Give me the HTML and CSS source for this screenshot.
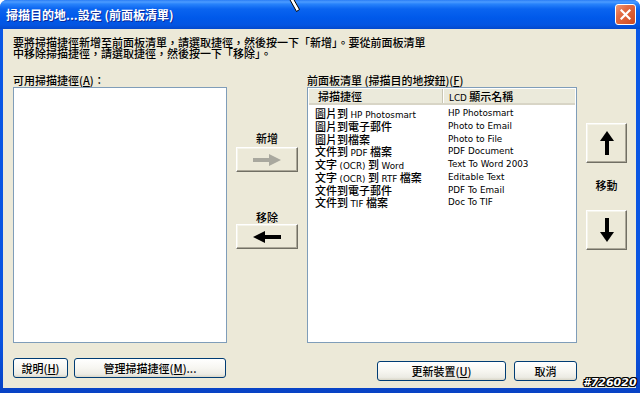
FILE: index.html
```html
<!DOCTYPE html>
<html lang="zh-Hant">
<head>
<meta charset="utf-8">
<title>掃描目的地...設定</title>
<link rel="stylesheet" href="styles.css">
</head>
<body>
<div class="window">
  <div class="titlebar">
    <span class="title">掃描目的地...設定 (前面板清單)</span>
    <button class="close" aria-label="關閉">
      <svg width="11" height="11" viewBox="0 0 11 11"><path d="M1.5 1.5 L9.5 9.5 M9.5 1.5 L1.5 9.5" stroke="#fff" stroke-width="2.2" stroke-linecap="square"/></svg>
    </button>
  </div>
  <div class="client">
    <p class="intro">要將掃描捷徑新增至前面板清單，請選取捷徑，然後按一下「新增」。要從前面板清單<br>中移除掃描捷徑，請選取捷徑，然後按一下「移除」。</p>
    <div class="panes">
      <div class="lbl lbl-left">可用掃描捷徑(<u>A</u>)：</div>
      <div class="lbl lbl-right">前面板清單 (掃描目的地按鈕)(<u>F</u>)</div>
      <div class="listbox left-list"></div>
      <div class="mid">
        <div class="mid-label">新增</div>
        <button class="cbtn arrow-btn" disabled>
          <svg width="28" height="12" viewBox="0 0 28 12"><rect x="0" y="4" width="18" height="4" fill="#a9a89e"/><path d="M16 0 L28 6 L16 12 Z" fill="#a9a89e"/></svg>
        </button>
        <div class="mid-label second">移除</div>
        <button class="cbtn arrow-btn">
          <svg width="28" height="12" viewBox="0 0 28 12"><rect x="10" y="4" width="18" height="4" fill="#000"/><path d="M12 0 L0 6 L12 12 Z" fill="#000"/></svg>
        </button>
      </div>
      <div class="listbox listview">
        <div class="lv-head"><span>掃描捷徑</span><span class="c2"><span class="en">LCD</span> 顯示名稱</span></div>
        <div class="lv-rows">
          <div class="lv-row"><span>圖片到 <span class="en">HP Photosmart</span></span><span class="en">HP Photosmart</span></div>
          <div class="lv-row"><span>圖片到電子郵件</span><span class="en">Photo to Email</span></div>
          <div class="lv-row"><span>圖片到檔案</span><span class="en">Photo to File</span></div>
          <div class="lv-row"><span>文件到 <span class="en">PDF</span> 檔案</span><span class="en">PDF Document</span></div>
          <div class="lv-row"><span>文字 <span class="en">(OCR)</span> 到 <span class="en">Word</span></span><span class="en">Text To Word 2003</span></div>
          <div class="lv-row"><span>文字 <span class="en">(OCR)</span> 到 <span class="en">RTF</span> 檔案</span><span class="en">Editable Text</span></div>
          <div class="lv-row"><span>文件到電子郵件</span><span class="en">PDF To Email</span></div>
          <div class="lv-row"><span>文件到 <span class="en">TIF</span> 檔案</span><span class="en">Doc To TIF</span></div>
        </div>
      </div>
      <div class="move">
        <button class="cbtn move-btn" aria-label="上移">
          <svg width="14" height="24" viewBox="0 0 14 24"><path d="M7 0 L14 10 L0 10 Z" fill="#000"/><rect x="5" y="8" width="4" height="16" fill="#000"/></svg>
        </button>
        <div class="move-label">移動</div>
        <button class="cbtn move-btn" aria-label="下移">
          <svg width="14" height="24" viewBox="0 0 14 24"><path d="M7 24 L14 14 L0 14 Z" fill="#000"/><rect x="5" y="0" width="4" height="16" fill="#000"/></svg>
        </button>
      </div>
    </div>
    <div class="footer">
      <div class="group">
        <button class="xbtn help">說明(<u>H</u>)</button>
        <button class="xbtn manage">管理掃描捷徑(<u>M</u>)...</button>
      </div>
      <div class="group right">
        <button class="xbtn update">更新裝置(<u>U</u>)</button>
        <button class="xbtn cancel">取消</button>
      </div>
    </div>
  </div>
  <div class="stamp">#726020</div>
  <svg class="cursor" width="16" height="14" viewBox="0 0 16 14"><path d="M3.5 -1 L7.5 -1 L13.5 9.5 L10.5 11.5 Z" fill="#fff" stroke="#000" stroke-width="1"/></svg>
</div>
</body>
</html>
```

FILE: styles.css
```css
* { box-sizing: border-box; }
html, body { margin: 0; padding: 0; background: #ffffff; }
body {
  font-family: "Noto Sans CJK TC", "Liberation Sans", sans-serif;
  font-size: 11px;
  font-weight: 500;
  color: #000;
}
.en {
  font-family: "DejaVu Sans", "Noto Sans CJK TC", sans-serif;
  font-size: 8.8px;
  font-weight: normal;
  line-height: 10px;
}
.window {
  position: relative;
  width: 640px;
  height: 393px;
  display: flex;
  flex-direction: column;
  background: linear-gradient(to bottom, #0a58e6 0, #0a54e0 340px, #0842c4 393px);
  border-radius: 7px 7px 0 0;
  overflow: hidden;
}
.titlebar {
  flex: none;
  height: 29px;
  display: flex;
  align-items: center;
  justify-content: space-between;
  padding: 0 4px 0 6px;
  background: linear-gradient(to bottom, #2a7df5 0, #4c9cff 2px, #2883fb 4px, #0a64f0 9px, #0059ea 18px, #0455e2 25px, #0449cc 29px);
}
.title {
  color: #fff;
  font-weight: bold;
  font-size: 12px;
  line-height: 14px;
  text-shadow: 1px 1px 0 #0a2a9a;
}
.close {
  width: 21px;
  height: 21px;
  padding: 0;
  border: 1px solid #fff;
  border-radius: 3px;
  background: linear-gradient(135deg, #f09a78 0%, #e26b43 35%, #cf4a20 100%);
  display: flex;
  align-items: center;
  justify-content: center;
}
.client {
  flex: 1;
  margin: 0 4px 5px 3px;
  background: #ece9d8;
  padding: 8px 0 0 10px;
}
.intro {
  margin: 0;
  line-height: 11px;
}
.panes {
  display: grid;
  grid-template-columns: 214px 80px 270px 59px;
  grid-template-rows: 13px 256px;
  margin-top: 15px;
}
.lbl { line-height: 13px; white-space: nowrap; }
.lbl-left { grid-column: 1; grid-row: 1; }
.lbl-right { grid-column: 3; grid-row: 1; }
.listbox {
  background: #fff;
  border: 1px solid #7f9db9;
}
.left-list { grid-column: 1; grid-row: 2; }
.mid {
  grid-column: 2;
  grid-row: 2;
  display: flex;
  flex-direction: column;
  align-items: center;
  padding-top: 45px;
}
.mid-label { line-height: 12px; margin-bottom: 3px; }
.mid-label.second { margin-top: 39px; margin-bottom: 1px; }
.cbtn {
  padding: 0;
  background: #ece9d8;
  border: 1px solid;
  border-color: #ffffff #716f64 #716f64 #ffffff;
  box-shadow: inset -1px -1px 0 #aca899, inset 1px 1px 0 #f5f4ea;
  display: flex;
  align-items: center;
  justify-content: center;
}
.arrow-btn { width: 62px; height: 25px; }
.listview {
  grid-column: 3;
  grid-row: 2;
  padding: 1px;
  display: flex;
  flex-direction: column;
}
.lv-head {
  height: 16px;
  display: grid;
  grid-template-columns: 133px 1fr;
  grid-template-rows: 14px;
  background: #ebeadb;
  border-bottom: 2px solid #d8d5c6;
  line-height: 14px;
}
.lv-head > span { padding-left: 9px; white-space: nowrap; }
.lv-head > .c2 { border-left: 1px solid #c9c6b4; padding-left: 6px; box-shadow: inset 1px 0 0 #fff; }
.lv-rows { padding-top: 2px; }
.lv-row {
  display: grid;
  grid-template-columns: 133px 1fr;
  grid-template-rows: 12.75px;
  height: 12.75px;
  padding-left: 6px;
  line-height: 12.75px;
  white-space: nowrap;
}
.lv-row > span { height: 12.75px; }
.lv-row > .en { line-height: 12.75px; }
.move {
  grid-column: 4;
  grid-row: 2;
  display: flex;
  flex-direction: column;
  align-items: center;
  padding-top: 36px;
}
.move-btn { width: 41px; height: 40px; }
.move-label { line-height: 12px; margin: 16px 0 19px; }
.footer {
  width: 564px;
  margin-top: 15px;
  display: flex;
  justify-content: space-between;
  align-items: flex-start;
}
.group { display: flex; gap: 6px; }
.group.right { gap: 8px; margin-top: 3px; }
.xbtn {
  height: 20px;
  padding: 0;
  border: 1px solid #003c74;
  border-radius: 3px;
  background: linear-gradient(to bottom, #ffffff 0%, #f7f6f1 50%, #ecebe4 85%, #d9d6c8 100%);
  font-family: inherit;
  font-size: 11px;
  font-weight: inherit;
  line-height: 18px;
  color: #000;
}
.help { width: 55px; }
.manage { width: 152px; }
.update { width: 129px; }
.cancel { width: 63px; }
.stamp {
  position: absolute;
  left: 583px;
  top: 376px;
  font-family: "DejaVu Sans", sans-serif;
  font-weight: bold;
  font-style: italic;
  font-size: 11px;
  line-height: 14px;
  color: #fff;
  text-shadow: 1px 0 0 #000, -1px 0 0 #000, 0 1px 0 #000, 0 -1px 0 #000, 1px 1px 0 #000, -1px -1px 0 #000, 1px -1px 0 #000, -1px 1px 0 #000;
}
.cursor {
  position: absolute;
  left: 286px;
  top: 0;
}
```
